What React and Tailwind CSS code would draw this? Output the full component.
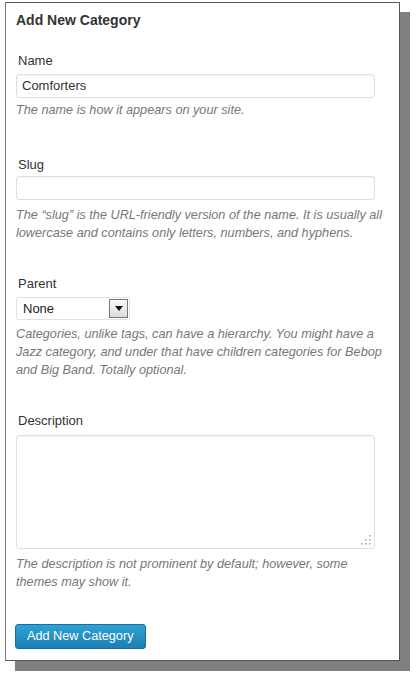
const font = {fontFamily: '"Liberation Sans", Arial, sans-serif'};

const Help = ({children, className = ""}) => (
    <p className={`text-[12.7px] italic text-[#777] leading-[18px] ${className}`}>{children}</p>
);

const Label = ({children, className = ""}) => (
    <div className={`text-[13px] leading-[16px] text-[#333] pl-[2px] ${className}`}>{children}</div>
);

const App = () => {
    return (
        <div className="w-[418px] h-[676px] bg-white overflow-hidden" style={font}>
            <div className="ml-[5px] mt-[2px] w-[395px] h-[659px] bg-white border border-[#555] border-l-[#777] shadow-[10px_10px_0_#808080] pt-[8px] pl-[10px] pr-[8px]">
                <h3 className="text-[14px] font-bold leading-[18px] text-[#333]">Add New Category</h3>

                {/* Name */}
                <Label className="mt-[24px]">Name</Label>
                <div className="mt-[5px] w-[359px] h-[24px] border border-[#dfdfdf] rounded-[3px] shadow-[inset_0_1px_2px_rgba(0,0,0,0.05)] flex items-center px-[5px] text-[13px] text-[#333]">
                    Comforters
                </div>
                <Help className="mt-[3px]">The name is how it appears on your site.</Help>

                {/* Slug */}
                <Label className="mt-[38px]">Slug</Label>
                <div className="mt-[3px] w-[359px] h-[24px] border border-[#dfdfdf] rounded-[3px] shadow-[inset_0_1px_2px_rgba(0,0,0,0.05)]"/>
                <Help className="mt-[6px] leading-[17px]">
                    The “slug” is the URL-friendly version of the name. It is usually all lowercase and contains only letters, numbers, and hyphens.
                </Help>

                {/* Parent */}
                <Label className="mt-[34px]">Parent</Label>
                <div className="mt-[5px] w-[114px] h-[23px] border border-[#e2e2e2] rounded-[2px] flex items-center justify-between pl-[6px] pr-[1px] text-[13px] text-[#222]">
                    <span>None</span>
                    <span className="w-[19px] h-[19px] border border-[#777] bg-gradient-to-b from-[#fafafa] to-[#dcdcdc] flex items-center justify-center">
                        <svg width="8" height="5" viewBox="0 0 8 5"><path d="M0 0h8L4 5z" fill="#111"/></svg>
                    </span>
                </div>
                <Help className="mt-[5px]">
                    Categories, unlike tags, can have a hierarchy. You might have a Jazz category, and under that have children categories for Bebop and Big Band. Totally optional.
                </Help>

                {/* Description */}
                <Label className="mt-[34px]">Description</Label>
                <div className="relative mt-[6px] w-[359px] h-[114px] border border-[#dfdfdf] rounded-[3px] shadow-[inset_0_1px_2px_rgba(0,0,0,0.05)]">
                    <svg className="absolute right-[3px] bottom-[3px]" width="10" height="10" viewBox="0 0 10 10" fill="#aaa">
                        <rect x="8" y="0" width="1.5" height="1.5"/>
                        <rect x="4" y="4" width="1.5" height="1.5"/>
                        <rect x="8" y="4" width="1.5" height="1.5"/>
                        <rect x="0" y="8" width="1.5" height="1.5"/>
                        <rect x="4" y="8" width="1.5" height="1.5"/>
                        <rect x="8" y="8" width="1.5" height="1.5"/>
                    </svg>
                </div>
                <Help className="mt-[6px]">
                    The description is not prominent by default; however, some themes may show it.
                </Help>

                <button className="mt-[33px] -ml-[1px] h-[25px] px-[11px] rounded-[3px] border border-[#1b6f9c] bg-gradient-to-b from-[#2ea2d6] to-[#1b7fb2] text-white text-[12.7px] leading-none">
                    Add New Category
                </button>
            </div>
        </div>
    );
};

export default App;
